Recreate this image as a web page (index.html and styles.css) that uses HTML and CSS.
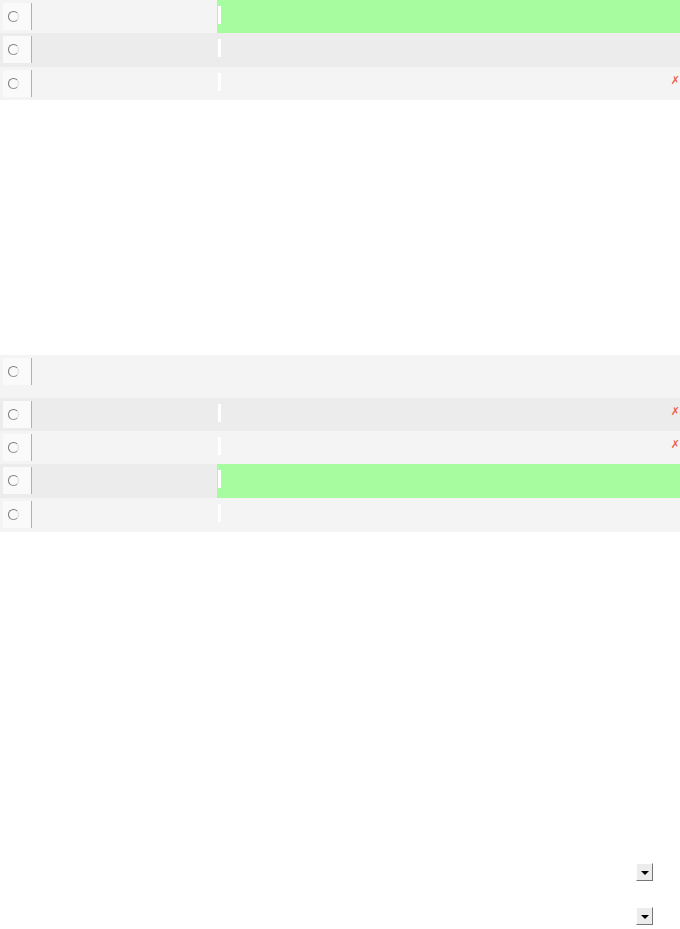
FILE: index.html
```html
<!DOCTYPE html>
<html lang="en">
<head>
  <meta charset="UTF-8">
  <title>Answers</title>
  <link rel="stylesheet" href="styles.css">
</head>
<body>

  <!-- first block -->
  <div class="answers">
    <div class="row light correct">
      <div class="choice"><span class="pick"><span class="radio"></span></span></div>
      <div class="answer"><span class="field"></span></div>
    </div>
    <div class="row dark high">
      <div class="choice"><span class="pick"><span class="radio"></span></span></div>
      <div class="answer"><span class="field"></span></div>
    </div>
    <div class="row light">
      <div class="choice"><span class="pick"><span class="radio"></span></span></div>
      <div class="answer"><span class="field"></span><span class="wrong">&#x2717;</span></div>
    </div>
  </div>

  <!-- second block -->
  <div class="answers second">
    <div class="row light tall">
      <div class="choice"><span class="pick"><span class="radio"></span></span></div>
      <div class="answer"></div>
    </div>
    <div class="row dark">
      <div class="choice"><span class="pick"><span class="radio"></span></span></div>
      <div class="answer"><span class="field"></span><span class="wrong">&#x2717;</span></div>
    </div>
    <div class="row light">
      <div class="choice"><span class="pick"><span class="radio"></span></span></div>
      <div class="answer"><span class="field"></span><span class="wrong">&#x2717;</span></div>
    </div>
    <div class="row dark correct high">
      <div class="choice"><span class="pick"><span class="radio"></span></span></div>
      <div class="answer"><span class="field"></span></div>
    </div>
    <div class="row light high">
      <div class="choice"><span class="pick"><span class="radio"></span></span></div>
      <div class="answer"><span class="field"></span></div>
    </div>
  </div>

  <!-- dropdowns -->
  <div class="drops">
    <span class="drop"><span class="arrow"></span></span>
    <span class="drop"><span class="arrow"></span></span>
  </div>

</body>
</html>
```

FILE: styles.css
```css
/* Basic Styling */
body {
  margin: 0;
  background-color: #fff;
  font-family: "DejaVu Sans", sans-serif;
  width: 680px;
}

.answers {
  display: flex;
  flex-direction: column;
}

.second {
  margin-top: 255px;
}

.row {
  display: flex;
  height: 33px;
}

.row.high {
  height: 34px;
}

.row.tall {
  height: 43px;
}

.light {
  background-color: #f4f4f4;
}

.dark {
  background-color: #ececec;
}

.choice {
  width: 217px;
  padding: 3px 0 0 3px;
  box-sizing: border-box;
}

.pick {
  display: flex;
  align-items: center;
  width: 29px;
  height: 27px;
  background-color: #fafafa;
  border-right: 1px solid #b0b0b0;
  box-sizing: border-box;
}

.radio {
  width: 11px;
  height: 11px;
  margin-left: 5px;
  border-radius: 50%;
  border: 1.5px solid #7a7a7a;
  border-right-color: #dcdcdc;
  border-bottom-color: #9a9a9a;
  box-sizing: border-box;
}

.answer {
  flex: 1;
  display: flex;
  align-items: flex-start;
  justify-content: space-between;
  padding: 6px 0 0 1px;
}

.correct .answer {
  background-color: #a8fca0;
}

.field {
  width: 3px;
  height: 18px;
  background-color: #fff;
}

.wrong {
  color: #f0604a;
  font-size: 11px;
  line-height: 14px;
  margin-top: 1px;
}

.drops {
  display: flex;
  flex-direction: column;
  align-items: flex-end;
  gap: 26px;
  margin-top: 331px;
  padding-right: 27px;
}

.drop {
  display: flex;
  align-items: center;
  justify-content: center;
  width: 17px;
  height: 18px;
  background-color: #ececec;
  border-right: 1px solid #777;
  border-bottom: 1px solid #777;
  border-top: 1px solid #fff;
  border-left: 1px solid #fff;
  box-sizing: border-box;
}

.arrow {
  width: 0;
  height: 0;
  border-left: 4px solid transparent;
  border-right: 4px solid transparent;
  border-top: 4px solid #000;
  margin-top: 2px;
}
```
